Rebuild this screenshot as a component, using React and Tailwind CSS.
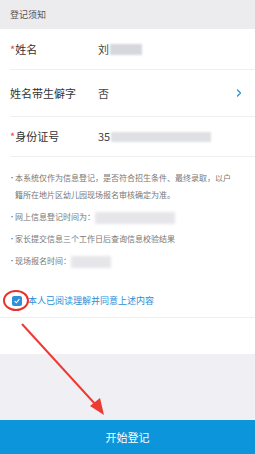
import { ChevronRight } from "lucide-react";

const notes = [
  { text: "本系统仅作为信息登记，是否符合招生条件、最终录取，以户籍所在地片区幼儿园现场报名审核确定为准。" },
  { text: "网上信息登记时间为：", blur: "w-[80px]" },
  { text: "家长提交信息三个工作日后查询信息校验结果" },
  { text: "现场报名时间：", blur: "w-[40px]" },
];

function Row({ label, required, children, right, h }) {
  return (
    <div className={`flex items-center ml-[10px] border-b border-[#efefef] ${h}`}>
      <div className="w-[88px] text-[11px] text-[#333]">
        {required && <span className="text-[#f04a3e]">*</span>}
        {label}
      </div>
      <div className="flex-1 text-[11px] text-[#444] flex items-center">{children}</div>
      {right}
    </div>
  );
}

export default function App() {
  return (
    <div
      className="relative w-[255px] h-[454px] flex flex-col bg-[#f0eff4] overflow-hidden"
      style={{ fontFamily: '"Noto Sans CJK SC", "Noto Sans", sans-serif' }}
    >
      <div className="h-[29px] flex items-center px-[10px] text-[9px] text-[#555] bg-[#ececee]">登记须知</div>

      <div className="bg-white">
        <Row label="姓名" required h="h-[41px]">
          <span>刘</span>
          <span className="ml-[1px] h-[11px] w-[32px] bg-[#d6d7dc] blur-[1px]" />
        </Row>
        <Row
          label="姓名带生僻字"
          h="h-[47px]"
          right={<ChevronRight className="w-[12px] h-[12px] text-[#2a8fd6] mr-[10px]" strokeWidth={2.5} />}
        >
          否
        </Row>
        <Row label="身份证号" required h="h-[40px]">
          <span>35</span>
          <span className="ml-[1px] h-[10px] w-[100px] bg-[#dfe0e4] blur-[1px]" />
        </Row>

        <ul className="pt-[12px] pb-[6px] pl-[9px] pr-[18px] flex flex-col gap-[5px]">
          {notes.map((n, i) => (
            <li key={i} className="flex text-[8px] leading-[17px] text-[#777]">
              <span className="w-[6px] shrink-0 text-[6px] text-[#555]">•</span>
              <span>
                {n.text}
                {n.blur && (
                  <span className={`inline-block align-middle h-[12px] bg-[#e6e6ea] blur-[1.5px] ${n.blur}`} />
                )}
              </span>
            </li>
          ))}
        </ul>

        <div className="mt-[9px] h-[34px] flex items-center pl-[12px] border-b border-[#efefef]">
          <div className="relative">
            <span className="flex items-center justify-center w-[10px] h-[10px] rounded-[2px] bg-[#2f8fd8]">
              <svg viewBox="0 0 10 10" className="w-[8px] h-[8px]">
                <path d="M2 5.2 L4.2 7.2 L8 2.8" fill="none" stroke="white" strokeWidth="1.4" />
              </svg>
            </span>
            <span className="absolute -left-[9px] -top-[6px] w-[26px] h-[21px] rounded-[50%] border-2 border-[#e8322c]" />
          </div>
          <span className="ml-[6px] text-[9px] text-[#2a8fd6]">本人已阅读理解并同意上述内容</span>
        </div>
        <div className="h-[36px]" />
      </div>

      <div className="flex-1" />

      <button className="h-[34px] w-full bg-[#0d95dc] text-white text-[11px]">开始登记</button>

      <svg className="absolute left-0 top-0 w-[255px] h-[454px] pointer-events-none" viewBox="0 0 255 454">
        <line x1="22" y1="324" x2="96" y2="405" stroke="#ee3a34" strokeWidth="2" />
        <polygon points="104,415 90,406 100,398" fill="#ee3a34" />
      </svg>
    </div>
  );
}
